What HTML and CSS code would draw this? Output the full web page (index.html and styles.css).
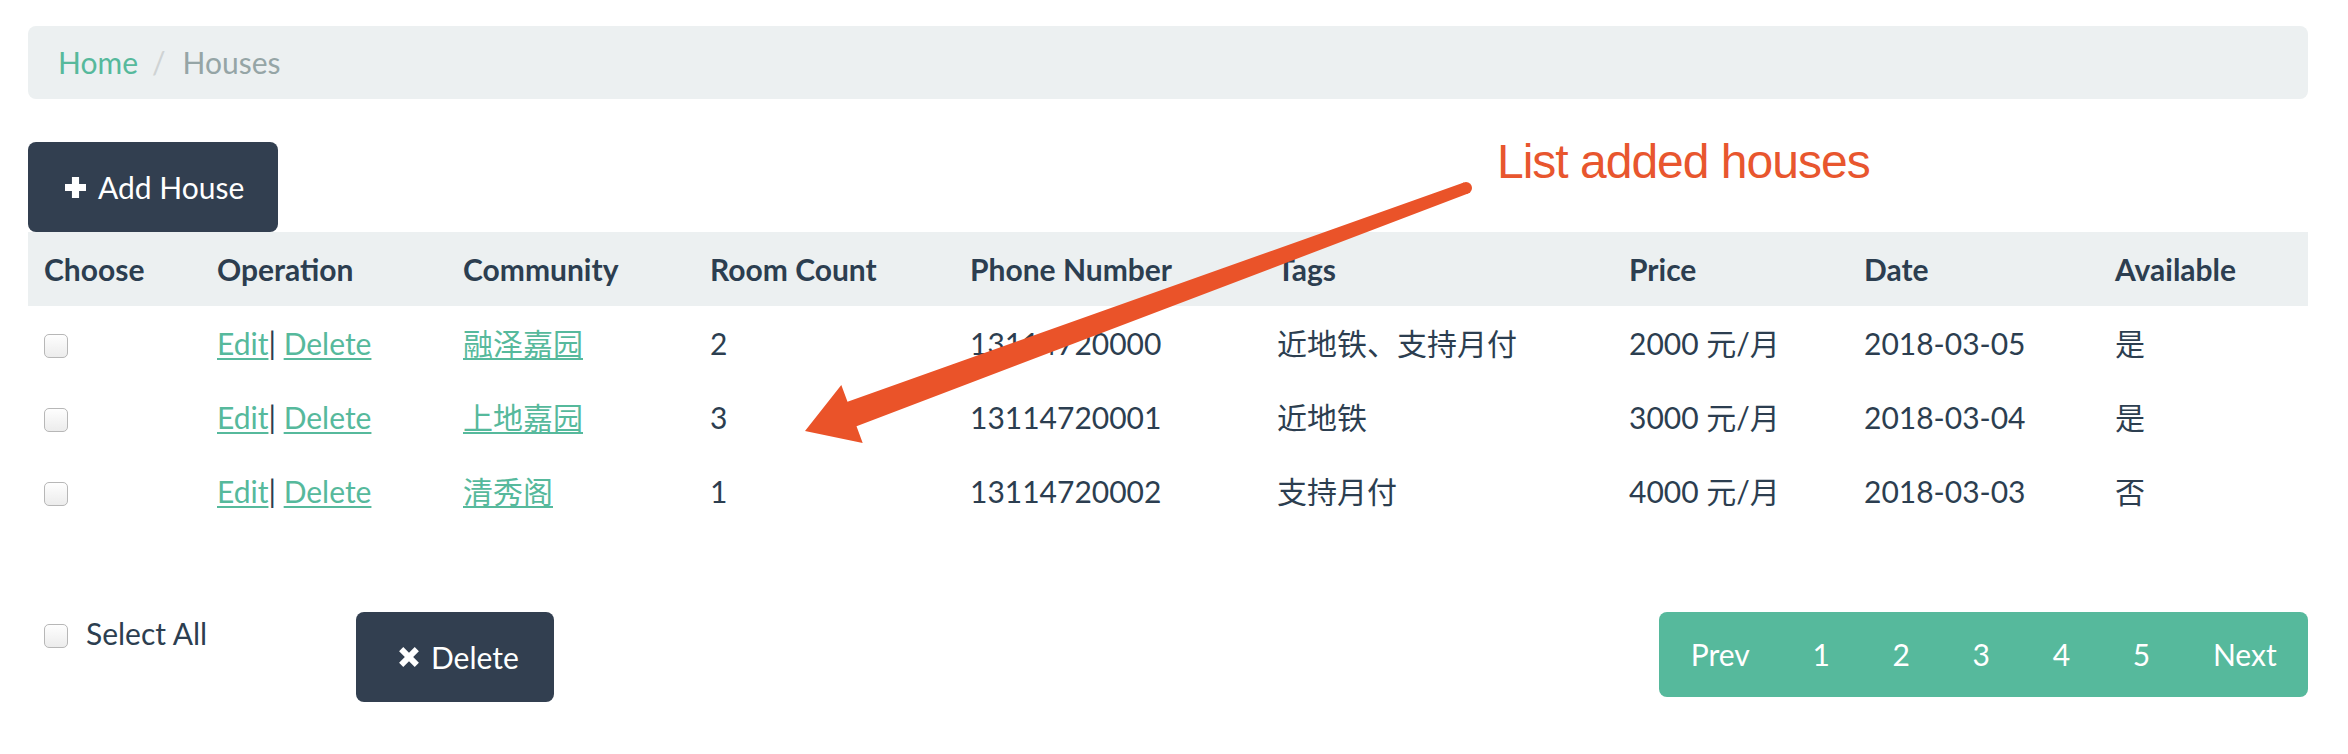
FILE: index.html
```html
<!DOCTYPE html>
<html lang="zh">
<head>
<meta charset="utf-8">
<title>Houses</title>
<link rel="stylesheet" href="styles.css">
</head>
<body>
<div class="page">
  <ol class="breadcrumb">
    <li><a href="#" class="crumb-link">Home</a></li>
    <li class="crumb-sep">/</li>
    <li class="crumb-active">Houses</li>
  </ol>

  <button class="btn btn-add" type="button">
    <svg class="icon icon-plus" viewBox="0 0 20 20"><path d="M6.6 0h6.8v6.6h6.6v6.8h-6.6v6.6H6.6v-6.6H0V6.6h6.6z"/></svg>
    <span>Add House</span>
  </button>

  <table class="houses">
    <colgroup>
      <col class="c-choose"><col class="c-op"><col class="c-comm"><col class="c-room"><col class="c-phone"><col class="c-tags"><col class="c-price"><col class="c-date"><col class="c-avail">
    </colgroup>
    <thead>
      <tr><th>Choose</th><th>Operation</th><th>Community</th><th>Room Count</th><th>Phone Number</th><th>Tags</th><th>Price</th><th>Date</th><th>Available</th></tr>
    </thead>
    <tbody>
      <tr>
        <td><input type="checkbox" class="check row-check"></td>
        <td><a href="#" class="link">Edit</a>| <a href="#" class="link">Delete</a></td>
        <td><a href="#" class="link">融泽嘉园</a></td>
        <td>2</td>
        <td>13114720000</td>
        <td>近地铁、支持月付</td>
        <td>2000 元/月</td>
        <td>2018-03-05</td>
        <td>是</td>
      </tr>
      <tr>
        <td><input type="checkbox" class="check row-check"></td>
        <td><a href="#" class="link">Edit</a>| <a href="#" class="link">Delete</a></td>
        <td><a href="#" class="link">上地嘉园</a></td>
        <td>3</td>
        <td>13114720001</td>
        <td>近地铁</td>
        <td>3000 元/月</td>
        <td>2018-03-04</td>
        <td>是</td>
      </tr>
      <tr>
        <td><input type="checkbox" class="check row-check"></td>
        <td><a href="#" class="link">Edit</a>| <a href="#" class="link">Delete</a></td>
        <td><a href="#" class="link">清秀阁</a></td>
        <td>1</td>
        <td>13114720002</td>
        <td>支持月付</td>
        <td>4000 元/月</td>
        <td>2018-03-03</td>
        <td>否</td>
      </tr>
    </tbody>
  </table>

  <div class="footer-bar">
    <label class="select-all"><input type="checkbox" class="check"><span>Select All</span></label>
    <button class="btn btn-del" type="button">
      <svg class="icon icon-x" viewBox="0 0 20 20"><path d="M1 4.8 4.8 1 10 6.2 15.2 1 19 4.8 13.8 10 19 15.2 15.2 19 10 13.8 4.8 19 1 15.2 6.2 10z"/></svg>
      <span>Delete</span>
    </button>
    <ul class="pager">
      <li><a href="#">Prev</a></li>
      <li><a href="#">1</a></li>
      <li><a href="#">2</a></li>
      <li><a href="#">3</a></li>
      <li><a href="#">4</a></li>
      <li><a href="#">5</a></li>
      <li><a href="#">Next</a></li>
    </ul>
  </div>
</div>

<svg class="annotation" viewBox="0 0 2348 754">
  <polygon class="arrow" points="805,431 862.7,443 856.5,426.2 1468.1,193.6 1463.9,182.4 847.5,401.8 841.3,385"/>
  <circle class="arrow" cx="1466" cy="188" r="6"/>
  <text class="note" x="1497" y="178">List added houses</text>
</svg>
</body>
</html>
```

FILE: styles.css
```css
* { box-sizing: border-box; }

html, body {
  margin: 0;
  background: #fff;
}

body {
  position: relative;
  width: 2348px;
  height: 754px;
  overflow: hidden;
  font-family: Lato, "Noto Sans CJK SC", sans-serif;
  font-size: 30px;
  line-height: 43px;
  color: #2c3e50;
}

.page {
  width: 2308px;
  padding: 26px 0 0 28px;
}

/* breadcrumb */
.breadcrumb {
  list-style: none;
  margin: 0 0 43px;
  padding: 0 30px;
  height: 73px;
  display: flex;
  align-items: center;
  background: #ecf0f1;
  border-radius: 8px;
}
.crumb-link { color: #56b99c; text-decoration: none; }
.crumb-sep { color: #cfd3d4; margin: 0 17px 0 14px; }
.crumb-active { color: #95a5a6; }

/* buttons */
.btn {
  display: flex;
  align-items: center;
  width: fit-content;
  height: 90px;
  border: none;
  border-radius: 8px;
  background: #323f50;
  color: #fff;
  font-family: inherit;
  font-size: 30px;
  line-height: 43px;
  cursor: pointer;
}
.btn-add { padding: 0 34px 0 37px; }
.btn-del { padding: 0 35px 0 42px; }
.icon { fill: currentColor; flex: none; }
.icon-plus { width: 21px; height: 21px; margin-right: 12px; }
.icon-x { width: 22px; height: 22px; margin-right: 11px; }

/* table */
.houses {
  width: 2280px;
  border-collapse: collapse;
  table-layout: fixed;
  margin-bottom: 84px;
}
.c-choose { width: 173px; }
.c-op { width: 246px; }
.c-comm { width: 247px; }
.c-room { width: 260px; }
.c-phone { width: 307px; }
.c-tags { width: 352px; }
.c-price { width: 235px; }
.c-date { width: 251px; }
.c-avail { width: 209px; }

.houses th,
.houses td {
  height: 74px;
  padding: 0 16px;
  text-align: left;
  vertical-align: middle;
  white-space: nowrap;
}
.houses thead tr { background: #ecf0f1; }
.houses th { font-weight: 700; }

.link {
  color: #56b99c;
  text-decoration: underline;
  text-decoration-thickness: 2px;
  text-underline-offset: 3px;
}

/* checkboxes */
.check {
  -webkit-appearance: none;
  appearance: none;
  display: block;
  width: 24px;
  height: 24px;
  margin: 0;
  border: 1px solid #b7b7b7;
  border-radius: 5px;
  background: linear-gradient(#fefefe, #ececec);
}
.row-check { margin-top: 6px; }

/* footer */
.footer-bar {
  display: flex;
  align-items: flex-start;
}
.select-all {
  width: 328px;
  display: flex;
  align-items: flex-start;
  padding-left: 16px;
}
.select-all .check { margin: 12px 18px 0 0; }

.pager {
  list-style: none;
  margin: 0 0 0 auto;
  padding: 0;
  display: flex;
  height: 85px;
  background: #56b99c;
  border-radius: 8px;
}
.pager a {
  display: flex;
  align-items: center;
  height: 100%;
  padding: 0 31.35px;
  color: #fff;
  text-decoration: none;
}

/* annotation overlay */
.annotation {
  position: absolute;
  left: 0;
  top: 0;
  width: 2348px;
  height: 754px;
  pointer-events: none;
}
.arrow { fill: #ea5329; }
.note {
  fill: #e8562e;
  font-family: "Liberation Sans", Arial, sans-serif;
  font-size: 48px;
  letter-spacing: -1px;
}
```
